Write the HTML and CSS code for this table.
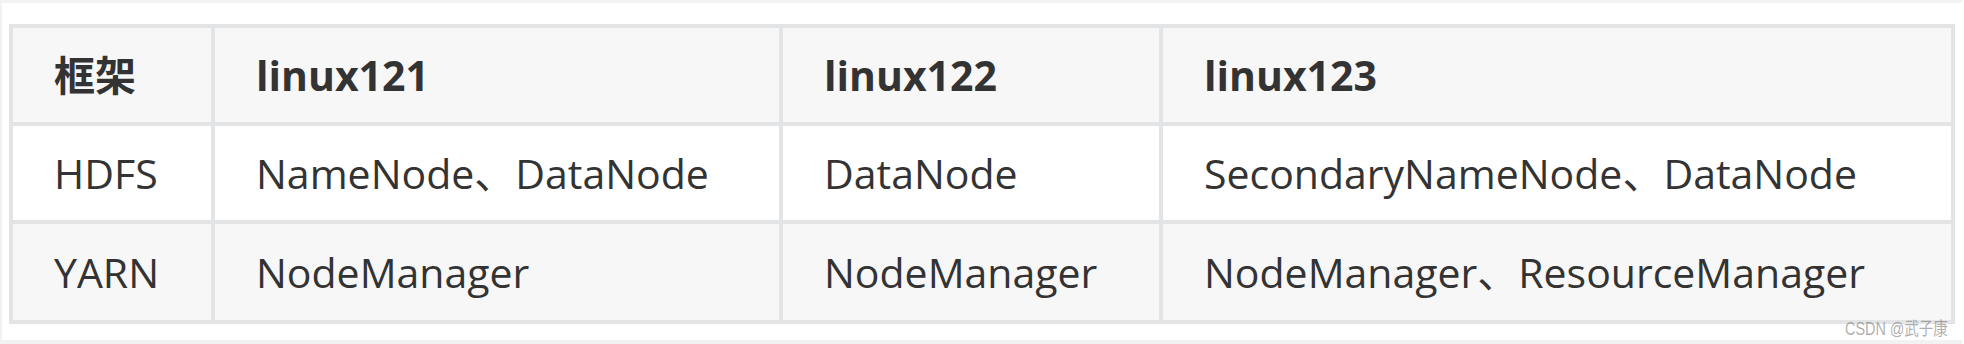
FILE: index.html
```html
<!DOCTYPE html>
<html lang="zh">
<head>
<meta charset="utf-8">
<link rel="stylesheet" href="styles.css">
</head>
<body>
<div class="page">
  <div class="grid">
    <div class="cell head">框架</div>
    <div class="cell head">linux121</div>
    <div class="cell head">linux122</div>
    <div class="cell head">linux123</div>
    <div class="cell odd">HDFS</div>
    <div class="cell odd">NameNode、DataNode</div>
    <div class="cell odd">DataNode</div>
    <div class="cell odd">SecondaryNameNode、DataNode</div>
    <div class="cell even">YARN</div>
    <div class="cell even">NodeManager</div>
    <div class="cell even">NodeManager</div>
    <div class="cell even">NodeManager、ResourceManager</div>
  </div>
  <div class="watermark">CSDN @武子康</div>
</div>
</body>
</html>
```
FILE: styles.css
```css
html, body {
  margin: 0;
  padding: 0;
  background: #ffffff;
}
.page {
  position: relative;
  width: 1962px;
  height: 344px;
  border-top: 3px solid #f2f2f2;
  border-left: 2px solid #f2f2f2;
  border-bottom: 4px solid #f2f2f2;
  background: #ffffff;
  padding: 21px 0 0 7px;
  box-sizing: border-box;
}
.grid {
  display: grid;
  grid-template-columns: 198px 564px 376px 788px;
  grid-template-rows: 94px 94px 96px;
  gap: 4px;
  padding: 4px;
  width: max-content;
  background: #e2e4e6;
}
.cell {
  display: flex;
  align-items: center;
  padding-left: 41px;
  font-family: "Open Sans", "Noto Sans CJK SC", sans-serif;
  font-size: 41px;
  line-height: 56px;
  color: #333333;
  white-space: nowrap;
}
.head {
  background: #f7f7f7;
  font-weight: 700;
}
.odd {
  background: #ffffff;
}
.even {
  background: #f7f7f7;
}
.watermark {
  position: absolute;
  left: 1843px;
  top: 317px;
  font-family: "Liberation Sans", "Noto Sans CJK SC", sans-serif;
  font-size: 18px;
  line-height: 18px;
  color: rgba(120, 120, 120, 0.6);
  transform: scaleX(0.8);
  transform-origin: left top;
  white-space: nowrap;
}
```
